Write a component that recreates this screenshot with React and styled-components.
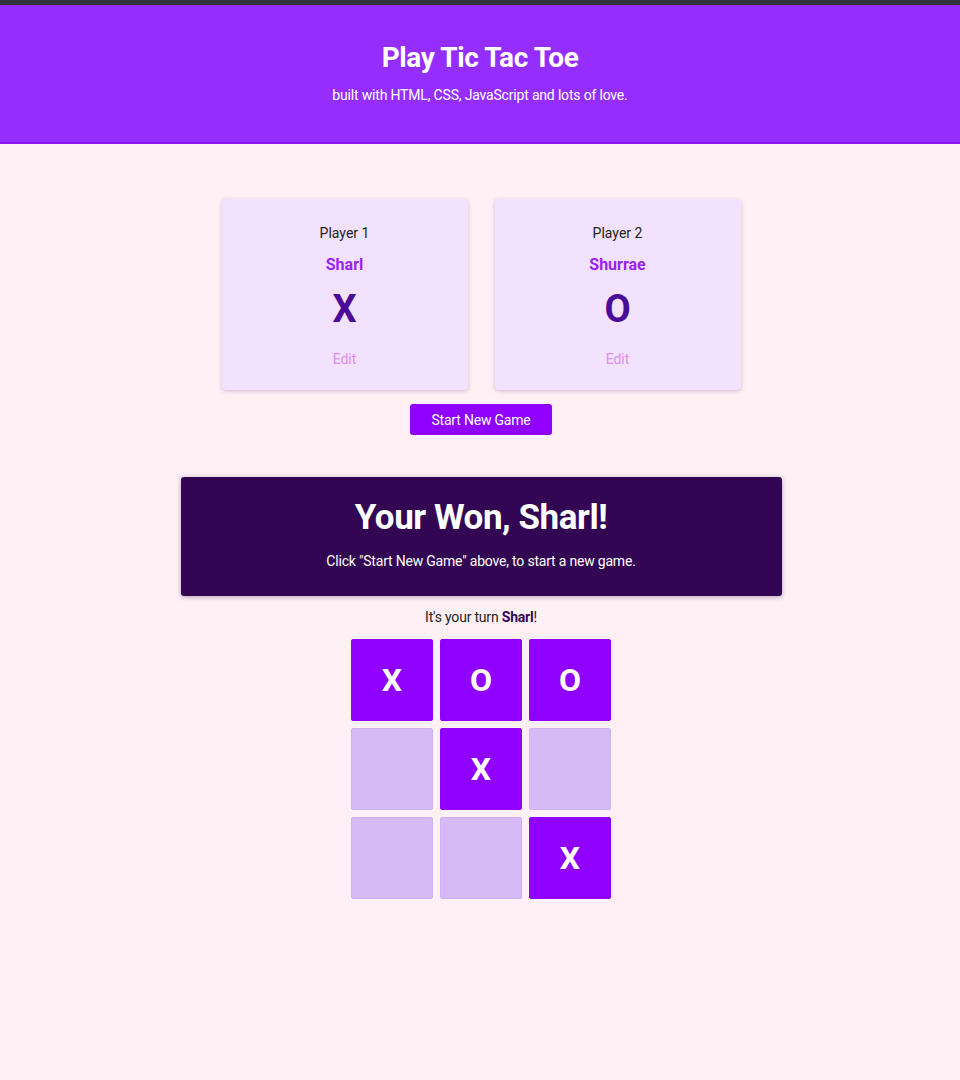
import React from "react";
import styled, { createGlobalStyle } from "styled-components";

const Global = createGlobalStyle`
  html, body { margin: 0; padding: 0; }
  body {
    background: #fff0f6;
    font-family: Roboto, "Liberation Sans", sans-serif;
    color: #1f1f24;
  }
`;

const TopBar = styled.div`
  height: 5px;
  background: #303438;
`;

const Header = styled.header`
  background: #952dff;
  border-bottom: 2px solid #8716ef;
  padding: 36px 0 38px;
  text-align: center;
  color: #fff;
`;

const Title = styled.h1`
  margin: 0;
  font-size: 28px;
  line-height: 33px;
  font-weight: 700;
  letter-spacing: -0.4px;
`;

const Subtitle = styled.p`
  margin: 13px 0 0;
  font-size: 14px;
  line-height: 17px;
  letter-spacing: -0.18px;
`;

const Main = styled.main`
  display: flex;
  flex-direction: column;
  align-items: center;
  padding: 55px 0 0 2px;
`;

const Players = styled.div`
  display: flex;
  gap: 27px;
`;

const Card = styled.div`
  width: 246px;
  height: 191px;
  box-sizing: border-box;
  background: #f3e2fd;
  border-radius: 4px;
  box-shadow: 0 1px 4px rgba(60, 20, 80, 0.25);
  display: flex;
  flex-direction: column;
  align-items: center;
  padding-top: 26px;
`;

const Label = styled.div`
  font-size: 14px;
  line-height: 17px;
  color: #222;
`;

const Name = styled.div`
  margin-top: 13px;
  font-size: 16px;
  line-height: 19px;
  font-weight: 700;
  color: #9a22f5;
`;

const Symbol = styled.div`
  margin-top: 13px;
  font-size: 38px;
  line-height: 45px;
  font-weight: 700;
  color: #4c0a99;
`;

const Edit = styled.div`
  margin-top: 19px;
  font-size: 14px;
  line-height: 17px;
  color: #e08cf2;
`;

const Button = styled.button`
  margin-top: 14px;
  width: 142px;
  height: 31px;
  border: none;
  border-radius: 3px;
  background: #8f00ff;
  color: #fff;
  font-family: Roboto, "Liberation Sans", sans-serif;
  font-size: 14px;
  letter-spacing: -0.2px;
`;

const Winner = styled.section`
  margin-top: 42px;
  width: 601px;
  height: 119px;
  box-sizing: border-box;
  background: #330654;
  border-radius: 3px;
  box-shadow: 0 1px 5px rgba(40, 0, 70, 0.35);
  color: #fff;
  text-align: center;
  padding-top: 20px;
`;

const WinTitle = styled.h2`
  margin: 0;
  font-size: 35px;
  line-height: 42px;
  font-weight: 700;
  letter-spacing: -0.45px;
`;

const WinText = styled.p`
  margin: 14px 0 0;
  font-size: 14px;
  line-height: 17px;
  letter-spacing: -0.2px;
`;

const Turn = styled.p`
  margin: 13px 0 0;
  font-size: 14px;
  line-height: 17px;
  color: #222;
  letter-spacing: -0.2px;
  b { color: #330654; }
`;

const Board = styled.div`
  margin-top: 13px;
  display: grid;
  grid-template-columns: repeat(3, 82px);
  grid-auto-rows: 82px;
  gap: 7px;
`;

const Cell = styled.div`
  box-sizing: border-box;
  border-radius: 2px;
  background: ${(p) => (p.$filled ? "#8f00ff" : "#d6baf5")};
  border: 1px solid ${(p) => (p.$filled ? "#8f00ff" : "#cfb1f2")};
  display: flex;
  align-items: center;
  justify-content: center;
  color: #fff;
  font-size: 32px;
  font-weight: 700;
`;

const board = ["X", "O", "O", "", "X", "", "", "", "X"];

export default function App() {
  return (
    <>
      <Global />
      <TopBar />
      <Header>
        <Title>Play Tic Tac Toe</Title>
        <Subtitle>built with HTML, CSS, JavaScript and lots of love.</Subtitle>
      </Header>
      <Main>
        <Players>
          <Card>
            <Label>Player 1</Label>
            <Name>Sharl</Name>
            <Symbol>X</Symbol>
            <Edit>Edit</Edit>
          </Card>
          <Card>
            <Label>Player 2</Label>
            <Name>Shurrae</Name>
            <Symbol>O</Symbol>
            <Edit>Edit</Edit>
          </Card>
        </Players>
        <Button>Start New Game</Button>
        <Winner>
          <WinTitle>Your Won, Sharl!</WinTitle>
          <WinText>Click "Start New Game" above, to start a new game.</WinText>
        </Winner>
        <Turn>
          It's your turn <b>Sharl</b>!
        </Turn>
        <Board>
          {board.map((v, i) => (
            <Cell key={i} $filled={!!v}>
              {v}
            </Cell>
          ))}
        </Board>
      </Main>
    </>
  );
}
